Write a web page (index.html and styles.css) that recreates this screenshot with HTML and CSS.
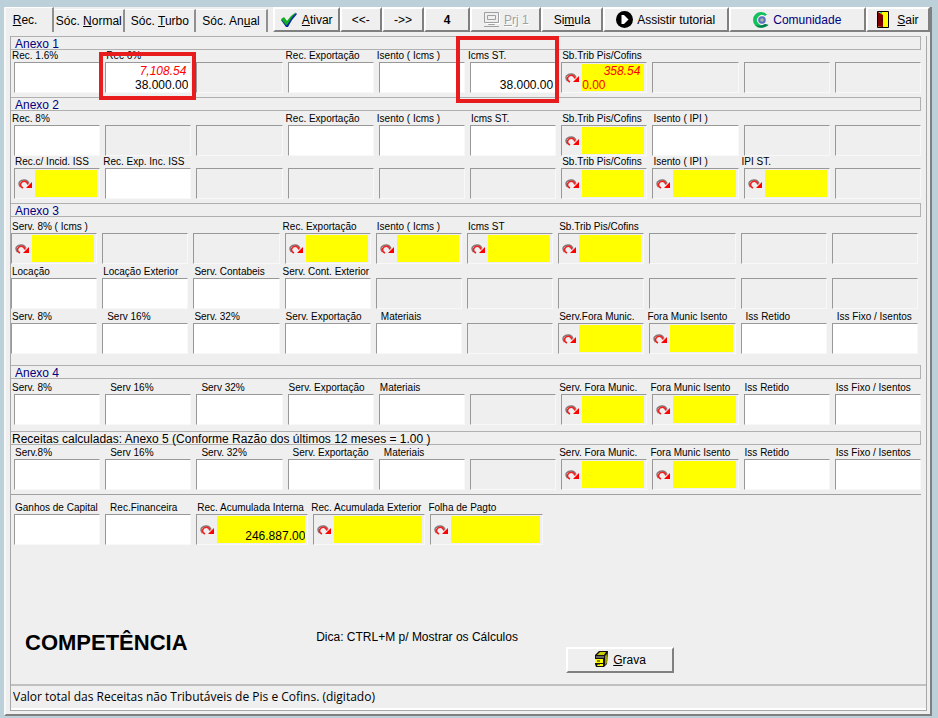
FILE: index.html
```html
<!DOCTYPE html>
<html lang="pt-BR">
<head>
  <meta charset="utf-8">
  <title>Receitas</title>
  <link rel="stylesheet" href="styles.css">
</head>
<body>
  <!-- shared icon -->
  <svg class="sprite" aria-hidden="true">
    <symbol id="arrow" viewBox="0 0 14 10">
      <path d="M2.500 8Q.2 5.500 1.500 3Q3.500.8 6.500 1Q9.500 1.200 11 4.500" fill="none" stroke="#857878" stroke-width="1.500"/>
      <path d="M5 9Q2 7.500 2.500 4.800Q3.800 2.200 6.500 2.300Q9 2.600 10 5.500" fill="none" stroke="#f02020" stroke-width="1.600"/>
      <path d="M14 3V9H8Z" fill="#f00"/>
    </symbol>
  </svg>

  <main class="window">
    <nav class="toolbar">
      <button class="tab active"><u>R</u>ec.</button>
      <button class="tab">Sóc. <u>N</u>ormal</button>
      <button class="tab">Sóc. <u>T</u>urbo</button>
      <button class="tab">Sóc. An<u>u</u>al</button>
      <button class="btn ativar">
        <svg width="18" height="16" viewBox="0 0 18 16"><path d="M1 8L4 6L7 10Q11 4 16 1L17 2Q12 7 8 15H6Z" fill="#0a2a9a"/><path d="M1 7L4 5L7 9Q11 3 16 0Q11 6 7 13H6Z" fill="#10b020"/></svg>
        <span><u>A</u>tivar</span>
      </button>
      <button class="btn nav">&lt;&lt;-</button>
      <button class="btn nav">-&gt;&gt;</button>
      <button class="btn four">4</button>
      <button class="btn prj" disabled>
        <svg width="17" height="17" viewBox="0 0 17 17" fill="none" stroke="#a0a0a0"><path d="M1.500 1.500H15.500V11.500H1.500ZM4.500 4.500H12.500V8.500H4.500ZM5.500 11.500V13.500H11.500V11.500M1 15.500H16"/><path d="M2.500 12.500H16.500V2" stroke="#fff"/></svg>
        <span><u>P</u>rj 1</span>
      </button>
      <button class="btn simula"><span>Si<u>m</u>ula</span></button>
      <button class="btn tutorial">
        <svg width="17" height="17" viewBox="0 0 17 17"><circle cx="8.500" cy="8.500" r="8.500"/><path d="M5.500 4H8L12.500 8.500L8 13H5.500Z" fill="#fff"/></svg>
        Assistir tutorial
      </button>
      <button class="btn comunidade">
        <svg width="16" height="16" viewBox="0 0 16 16"><path d="M14 2.500Q11 0 8 0A8 8 0 0 0 8 16Q12 16 15.500 13L12 12A5 5 0 1 1 12 4Z" fill="#12c05c"/><path d="M2 13Q8 18 15.500 13L12 12Q7 15 2 13Z" fill="#0a7a50"/><circle cx="9" cy="8" r="3.800" fill="#5a6fc0"/><circle cx="9" cy="8" r="1.800" fill="#b0b8a0"/></svg>
        Comunidade
      </button>
      <button class="btn sair">
        <svg width="12" height="17" viewBox="0 0 12 17"><path d="M.5.500H11.500V16.500H.500Z" fill="#ff0" stroke="#000"/><path d="M1 1L6 4V16L1 15.500Z" fill="#800000"/><path d="M2 1H5V3Z" fill="#0cc"/><path d="M4.500 9H6" stroke="#000"/></svg>
        <span><u>S</u>air</span>
      </button>
    </nav>

    <section class="page">
      <h2 class="bar">Anexo 1</h2>
      <div class="row">
        <label class="field"><span>Rec. 1.6%</span><input class="box"></label>
        <label class="field mark mark-rec"><span class="in">Rec 6%</span><span class="box total"><em>7,108.54</em><input value="38.000.00"></span></label>
        <div class="box blank"></div>
        <label class="field"><span>Rec. Exportação</span><input class="box"></label>
        <label class="field"><span>Isento ( Icms )</span><input class="box"></label>
        <label class="field mark mark-icms"><span>Icms ST.</span><span class="box total"><input value="38.000.00"></span></label>
        <div class="field"><label class="in" for="a1-trib">Sb.Trib Pis/Cofins</label><div class="box lookup"><button><svg><use href="#arrow"/></svg></button><span class="sum"><em>358.54</em><input id="a1-trib" value="0.00"></span></div></div>
        <div class="box blank"></div>
        <div class="box blank"></div>
        <div class="box blank"></div>
      </div>

      <h2 class="bar second">Anexo 2</h2>
      <div class="row">
        <label class="field"><span>Rec. 8%</span><input class="box"></label>
        <div class="box blank"></div>
        <div class="box blank"></div>
        <label class="field"><span>Rec. Exportação</span><input class="box"></label>
        <label class="field"><span>Isento ( Icms )</span><input class="box"></label>
        <label class="field"><span class="in">Icms ST.</span><input class="box"></label>
        <div class="field"><label class="in" for="a2-trib">Sb.Trib Pis/Cofins</label><div class="box lookup"><button><svg><use href="#arrow"/></svg></button><input id="a2-trib"></div></div>
        <label class="field"><span class="in">Isento ( IPI )</span><input class="box"></label>
        <div class="box blank"></div>
        <div class="box blank"></div>
      </div>
      <div class="row">
        <div class="field"><label class="in" for="a2-iss">Rec.c/ Incid. ISS</label><div class="box lookup"><button><svg><use href="#arrow"/></svg></button><input id="a2-iss"></div></div>
        <label class="field"><span>Rec. Exp. Inc. ISS</span><input class="box"></label>
        <div class="box blank"></div>
        <div class="box blank"></div>
        <div class="box blank"></div>
        <div class="box blank"></div>
        <div class="field"><label class="in" for="a2-trib2">Sb.Trib Pis/Cofins</label><div class="box lookup"><button><svg><use href="#arrow"/></svg></button><input id="a2-trib2"></div></div>
        <div class="field"><label class="in" for="a2-ipi">Isento ( IPI )</label><div class="box lookup"><button><svg><use href="#arrow"/></svg></button><input id="a2-ipi"></div></div>
        <div class="field"><label for="a2-ipist">IPI ST.</label><div class="box lookup"><button><svg><use href="#arrow"/></svg></button><input id="a2-ipist"></div></div>
        <div class="box blank"></div>
      </div>

      <h2 class="bar third">Anexo 3</h2>
      <div class="rows-left">
        <div class="row">
          <div class="field"><label class="in" for="a3-serv">Serv. 8% ( Icms )</label><div class="box lookup"><button><svg><use href="#arrow"/></svg></button><input id="a3-serv"></div></div>
          <div class="box blank"></div>
          <div class="box blank"></div>
          <div class="field"><label for="a3-exp">Rec. Exportação</label><div class="box lookup"><button><svg><use href="#arrow"/></svg></button><input id="a3-exp"></div></div>
          <div class="field"><label class="in" for="a3-isento">Isento ( Icms )</label><div class="box lookup"><button><svg><use href="#arrow"/></svg></button><input id="a3-isento"></div></div>
          <div class="field"><label class="in" for="a3-icms">Icms ST</label><div class="box lookup"><button><svg><use href="#arrow"/></svg></button><input id="a3-icms"></div></div>
          <div class="field"><label class="in" for="a3-trib">Sb.Trib Pis/Cofins</label><div class="box lookup"><button><svg><use href="#arrow"/></svg></button><input id="a3-trib"></div></div>
          <div class="box blank"></div>
          <div class="box blank"></div>
          <div class="box blank"></div>
        </div>
        <div class="row">
          <label class="field"><span class="in">Locação</span><input class="box"></label>
          <label class="field"><span class="in">Locação Exterior</span><input class="box"></label>
          <label class="field"><span class="in">Serv. Contabeis</span><input class="box"></label>
          <label class="field"><span>Serv. Cont. Exterior</span><input class="box"></label>
          <div class="box blank"></div>
          <div class="box blank"></div>
          <div class="box blank"></div>
          <div class="box blank"></div>
          <div class="box blank"></div>
          <div class="box blank"></div>
        </div>
        <div class="row">
          <label class="field"><span class="in">Serv. 8%</span><input class="box"></label>
          <label class="field"><span class="in2">Serv 16%</span><input class="box"></label>
          <label class="field"><span class="in">Serv. 32%</span><input class="box"></label>
          <label class="field"><span class="in">Serv. Exportação</span><input class="box"></label>
          <label class="field"><span class="in2">Materiais</span><input class="box"></label>
          <div class="box blank"></div>
          <div class="field"><label class="in" for="a3-fora">Serv.Fora Munic.</label><div class="box lookup"><button><svg><use href="#arrow"/></svg></button><input id="a3-fora"></div></div>
          <div class="field"><label for="a3-foraisento">Fora Munic Isento</label><div class="box lookup"><button><svg><use href="#arrow"/></svg></button><input id="a3-foraisento"></div></div>
          <label class="field"><span class="in2">Iss Retido</span><input class="box"></label>
          <label class="field"><span class="in2">Iss Fixo / Isentos</span><input class="box"></label>
        </div>
      </div>

      <h2 class="bar fourth">Anexo 4</h2>
      <div class="row">
        <label class="field"><span>Serv. 8%</span><input class="box"></label>
        <label class="field"><span class="in2">Serv 16%</span><input class="box"></label>
        <label class="field"><span class="in2">Serv 32%</span><input class="box"></label>
        <label class="field"><span class="in">Serv. Exportação</span><input class="box"></label>
        <label class="field"><span class="in">Materiais</span><input class="box"></label>
        <div class="box blank"></div>
        <div class="field"><label for="a4-fora">Serv. Fora Munic.</label><div class="box lookup"><button><svg><use href="#arrow"/></svg></button><input id="a4-fora"></div></div>
        <div class="field"><label for="a4-isento">Fora Munic Isento</label><div class="box lookup"><button><svg><use href="#arrow"/></svg></button><input id="a4-isento"></div></div>
        <label class="field"><span class="in">Iss Retido</span><input class="box"></label>
        <label class="field"><span class="in">Iss Fixo / Isentos</span><input class="box"></label>
      </div>

      <h2 class="bar calc">Receitas calculadas: Anexo 5 (Conforme Razão dos últimos 12 meses = 1.00 )</h2>
      <div class="row">
        <label class="field"><span class="in">Serv.8%</span><input class="box"></label>
        <label class="field"><span class="in2">Serv 16%</span><input class="box"></label>
        <label class="field"><span class="in2">Serv. 32%</span><input class="box"></label>
        <label class="field"><span class="in2">Serv. Exportação</span><input class="box"></label>
        <label class="field"><span class="in2">Materiais</span><input class="box"></label>
        <div class="box blank"></div>
        <div class="field"><label for="a5-fora">Serv. Fora Munic.</label><div class="box lookup"><button><svg><use href="#arrow"/></svg></button><input id="a5-fora"></div></div>
        <div class="field"><label for="a5-isento">Fora Munic Isento</label><div class="box lookup"><button><svg><use href="#arrow"/></svg></button><input id="a5-isento"></div></div>
        <label class="field"><span class="in">Iss Retido</span><input class="box"></label>
        <label class="field"><span class="in">Iss Fixo / Isentos</span><input class="box"></label>
      </div>

      <div class="row extra">
        <label class="field"><span class="in">Ganhos de Capital</span><input class="box"></label>
        <label class="field"><span class="in2">Rec.Financeira</span><input class="box"></label>
        <div class="field"><label class="in" for="interna">Rec. Acumulada Interna</label><div class="box lookup"><button><svg><use href="#arrow"/></svg></button><input id="interna" value="246.887.00"></div></div>
        <div class="field"><label for="exterior">Rec. Acumulada Exterior</label><div class="box lookup"><button><svg><use href="#arrow"/></svg></button><input id="exterior"></div></div>
        <div class="field"><label for="folha">Folha de Pagto</label><div class="box lookup"><button><svg><use href="#arrow"/></svg></button><input id="folha"></div></div>
      </div>

      <div class="bottom">
        <h1>COMPETÊNCIA</h1>
        <p>Dica: CTRL+M p/ Mostrar os Cálculos</p>
        <button class="btn grava">
          <svg width="15" height="17" viewBox="0 0 15 17"><path d="M1 4L5 0H14L13 13L10 16H2L1 13Z" fill="#111"/><path d="M3 4L6 1H12L10 4Z" fill="#cc0"/><path d="M11 5L13 3V12L11 14Z" fill="#990"/><path d="M2 5H10V7H2Z" fill="#666"/><path d="M1 8H9V12H1ZM4 13H9V15H3Z" fill="#ff0"/><path d="M3 10H6M5 12V14" stroke="#111"/></svg>
          <span><u>G</u>rava</span>
        </button>
      </div>
      <footer class="status">Valor total das Receitas não Tributáveis de Pis e Cofins. (digitado)</footer>
    </section>
  </main>
</body>
</html>
```
FILE: styles.css
```css
* {
  box-sizing: border-box;
}
body {
  margin: 0;
  padding: 7px 6px 2px 4px;
  min-height: 100vh;
  display: flex;
  background: #bcd0da;
  color: #000;
  font-family: "Liberation Sans", Arial, sans-serif;
  font-size: 12px;
}
button,
input {
  font: inherit;
  color: inherit;
  border: 0;
  padding: 0;
  margin: 0;
  min-width: 0;
  background: none;
  border-radius: 0;
}
.sprite {
  position: absolute;
  width: 0;
  height: 0;
}
.window {
  flex: 1;
  display: flex;
  flex-direction: column;
  background: #efefef;
  border: 2px solid #808080;
  border-top: 0;
  border-left-color: #f8f8f8;
}

/* toolbar */
.toolbar {
  display: flex;
  height: 25px;
}
.tab {
  flex: 1 1 71px;
  height: 23px;
  align-self: flex-end;
  border-top: 1px solid #fff;
  border-right: 2px solid #909090;
  white-space: nowrap;
}
.tab.active {
  flex-basis: 48px;
  height: 25px;
  padding-right: 8px;
}
.btn {
  display: flex;
  align-items: center;
  justify-content: center;
  gap: 4px;
  white-space: nowrap;
  background: #efefef;
  border: 2px solid #808080;
  border-top-color: #fff;
  border-left-color: #fff;
}
.ativar {
  flex: 1 1 67px;
  margin-left: 5px;
}
.nav {
  flex: 1 1 42px;
}
.four {
  flex: 1 1 46px;
  font-weight: bold;
}
.prj {
  flex: 1 1 71px;
  color: #a0a0a0;
  text-shadow: 1px 1px #fff;
}
.simula {
  flex: 1 1 61px;
}
.tutorial {
  flex: 1 1 126px;
}
.comunidade {
  flex: 1 1 137px;
  color: #000080;
}
.sair {
  flex: 1 1 64px;
  gap: 8px;
}

/* tab page */
.page {
  flex: 1;
  display: flex;
  flex-direction: column;
  margin: 4px 3px 3px 4px;
  padding-right: 5px;
  border: 1px solid #a8a8a8;
  border-top: 0;
}
.bar {
  height: 14px;
  margin: 0;
  padding-left: 4px;
  line-height: 15px;
  font-size: 12px;
  font-weight: normal;
  color: #000080;
  white-space: nowrap;
  border: 1px solid #b0b0b0;
  border-left: 0;
}
.bar.second {
  margin: 4px 0 2px;
}
.bar.third {
  margin: 4px 0;
}
.bar.fourth {
  margin: 11px 0 3px;
}
.bar.calc {
  margin: 6px 0 2px;
  padding-left: 1px;
  color: #000;
}
.row {
  display: grid;
  grid-template-columns: repeat(10, 1fr);
  align-items: end;
  column-gap: 5px;
  padding-left: 3px;
}
.rows-left {
  display: grid;
  row-gap: 2px;
  padding-right: 3px;
}
.rows-left .row {
  padding-left: 0;
}
.field {
  display: flex;
  flex-direction: column;
  min-width: 0;
}
.field > span:first-child,
.field > label {
  height: 12px;
  margin-left: -2px;
  line-height: 12px;
  font-size: 10px;
  white-space: nowrap;
}
.field > .in {
  padding-left: 3px;
}
.field > .in2 {
  padding-left: 7px;
}
.box {
  width: 100%;
  height: 31px;
  background: #fff;
  border: 1px solid #f8f8f8;
  border-top-color: #989898;
  border-left-color: #989898;
}
.blank {
  background: #efefef;
}
.lookup {
  display: flex;
  padding: 1px 2px 1px 0;
  background: #efefef;
}
.lookup button {
  flex: none;
  width: 20px;
}
.lookup svg {
  display: block;
  width: 14px;
  height: 10px;
  margin: 0 auto;
}
.lookup > input {
  flex: 1;
  padding-top: 13px;
  text-align: right;
  background: #ff0;
}

/* box with a calculated value over the typed one */
.total,
.sum {
  display: flex;
  flex-direction: column;
  justify-content: flex-end;
}
.total em,
.sum em {
  height: 13px;
  line-height: 13px;
  padding-right: 4px;
  text-align: right;
  color: #f00;
}
.total input {
  height: 14px;
  padding-right: 2px;
  text-align: right;
}
.sum {
  flex: 1;
  min-width: 0;
  background: #ff0;
}
.sum input {
  width: 100%;
  height: 13px;
  color: #f00;
}

/* red highlight frames */
.mark {
  position: relative;
}
.mark::after {
  content: "";
  position: absolute;
  inset: 2px -5px -7px -6px;
  border: 4px solid #e81c1c;
}
.mark-icms::after {
  inset: -14px -3px -10px -14px;
}

.extra {
  grid-template-columns: 86fr 86fr 112fr 112fr 112fr 373fr;
  margin-top: 4px;
  padding-top: 7px;
  border-top: 1px solid #a0a0a0;
}
.bottom {
  flex: 1;
  display: grid;
  grid-template-columns: 32% 29% 1fr;
  align-items: center;
  padding-top: 56px;
}
h1 {
  margin: 0;
  padding-left: 14px;
  font-size: 22px;
}
.bottom p {
  margin: 0;
  padding: 0 0 12px 14px;
  white-space: nowrap;
}
.grava {
  width: 108px;
  height: 26px;
  margin-top: 34px;
}
.status {
  height: 26px;
  margin-right: -5px;
  padding-left: 2px;
  border-top: 2px solid #c0c0c0;
  border-bottom: 2px solid #fff;
  font: 12px/22px "Open Sans", "Noto Sans", sans-serif;
}
```
